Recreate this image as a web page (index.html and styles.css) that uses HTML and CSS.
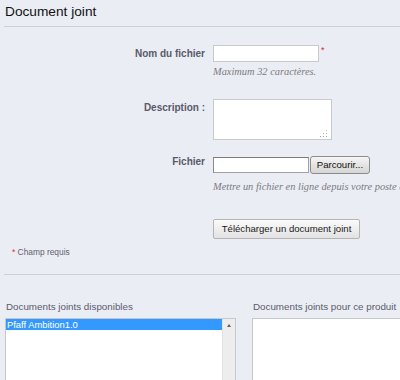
FILE: index.html
```html
<!DOCTYPE html>
<html lang="fr">
<head>
<meta charset="utf-8">
<title>Document joint</title>
<link rel="stylesheet" href="styles.css">
</head>
<body>
<div class="page">
  <h2 class="title">Document joint</h2>

  <div class="form">
    <div class="row row-name">
      <label class="lbl">Nom du fichier</label>
      <div class="field">
        <div class="inline">
          <input class="text" type="text">
          <span class="req">*</span>
        </div>
        <p class="hint">Maximum 32 caractères.</p>
      </div>
    </div>

    <div class="row row-desc">
      <label class="lbl lbl-desc">Description :</label>
      <div class="field">
        <div class="area-wrap">
          <textarea class="area"></textarea>
          <span class="grip"></span>
        </div>
      </div>
    </div>

    <div class="row row-file">
      <label class="lbl lbl-file">Fichier</label>
      <div class="field">
        <div class="inline file">
          <span class="file-box"></span>
          <span class="browse">Parcourir...</span>
        </div>
        <p class="hint hint-wide">Mettre un fichier en ligne depuis votre poste de travail.</p>
      </div>
    </div>

    <div class="row row-submit">
      <span class="lbl"></span>
      <div class="field">
        <button class="btn" type="button">Télécharger un document joint</button>
      </div>
    </div>
  </div>

  <p class="required"><span class="req-s">*</span> Champ requis</p>

  <div class="lists">
    <div class="col col-left">
      <p class="col-title">Documents joints disponibles</p>
      <div class="listbox">
        <div class="options">
          <div class="opt selected">Pfaff Ambition1.0</div>
        </div>
        <div class="scrollbar"><span class="arrow-up"></span></div>
      </div>
    </div>
    <div class="col col-right">
      <p class="col-title">Documents joints pour ce produit</p>
      <div class="listbox listbox-right"></div>
    </div>
  </div>
</div>
</body>
</html>
```

FILE: styles.css
```css
* { box-sizing: border-box; }

html, body {
  margin: 0;
  padding: 0;
  background: #ebedf4;
  width: 400px;
  height: 380px;
  overflow: hidden;
  font-family: "Liberation Sans", Arial, sans-serif;
}

.page {
  width: 400px;
}

.title {
  margin: 0 0 0 4px;
  padding-left: 1px;
  height: 27px;
  line-height: 24px;
  font-size: 13.7px;
  font-weight: normal;
  color: #111;
  border-bottom: 1px solid #cdd0d6;
}

.form {
  display: flex;
  flex-direction: column;
}

.row {
  display: flex;
  gap: 8px;
}

.lbl {
  width: 205px;
  flex: none;
  text-align: right;
  font-size: 10px;
  font-weight: bold;
  color: #585a69;
  line-height: 17px;
}

.field {
  display: flex;
  flex-direction: column;
}

.inline {
  display: flex;
  align-items: flex-start;
}

.row-name { margin-top: 18px; }

.text {
  width: 106px;
  height: 17px;
  margin: 0;
  padding: 0 2px;
  border: 1px solid #c9cacd;
  background: #fff;
  outline: none;
}

.req {
  color: #d81d1d;
  font-size: 9px;
  line-height: 9px;
  margin-left: 2px;
  margin-top: 1px;
}

.hint {
  margin: 3px 0 0 0;
  font-family: "Liberation Serif", "Times New Roman", serif;
  font-style: italic;
  font-size: 10.4px;
  line-height: 14px;
  color: #7b7b7f;
  white-space: nowrap;
}

.row-desc { margin-top: 20px; }

.lbl-desc {
  line-height: 14px;
  padding-top: 2px;
}

.area-wrap {
  position: relative;
  width: 119px;
  height: 41px;
}

.area {
  display: block;
  width: 119px;
  height: 41px;
  margin: 0;
  border: 1px solid #c9cacd;
  background: #fff;
  resize: none;
  outline: none;
}

.grip {
  position: absolute;
  right: 5px;
  bottom: 3px;
  width: 1px;
  height: 1px;
  background: #a5a5a5;
  box-shadow:
    0 -3px 0 #b5b5b5,
    -3px 0 0 #a5a5a5,
    -3px -3px 0 #b5b5b5,
    -6px 0 0 #a5a5a5,
    0 -6px 0 #c5c5c5;
}

.row-file { margin-top: 16px; }

.lbl-file {
  line-height: 12px;
}

.file {
  height: 18px;
}

.file-box {
  display: block;
  width: 96px;
  height: 16px;
  margin-top: 1px;
  background: #fff;
  border: 1px solid #a0a0a0;
  border-top-color: #7a7a7a;
  border-left-color: #8a8a8a;
}

.browse {
  display: block;
  height: 18px;
  width: 60px;
  margin-left: 1px;
  border: 1px solid #8c8c8c;
  border-radius: 3px;
  background: linear-gradient(#f6f6f6, #e4e4e4 50%, #d6d6d6);
  font-size: 9.6px;
  line-height: 16px;
  text-align: center;
  color: #111;
}

.hint-wide {
  margin-top: 6px;
}

.row-submit { margin-top: 25px; }

.btn {
  display: block;
  height: 20px;
  width: 147px;
  margin: 0;
  padding: 0;
  border: 1px solid #b4b4b4;
  border-radius: 2px;
  background: linear-gradient(#fbfbfb, #ececec 60%, #e2e2e2);
  font-family: "Liberation Sans", Arial, sans-serif;
  font-size: 9.6px;
  line-height: 18px;
  color: #1a1a1a;
  text-align: center;
}

.required {
  margin: 7px 0 0 0;
  padding-left: 12px;
  font-size: 8.4px;
  line-height: 12px;
  color: #5f6170;
}

.req-s {
  color: #d81d1d;
}

.lists {
  margin: 16px 0 0 4px;
  border-top: 1px solid #cdd0d6;
  padding: 26px 0 0 1px;
  display: flex;
  gap: 16px;
}

.col {
  display: flex;
  flex-direction: column;
}

.col-left { width: 231px; flex: none; }
.col-right { flex: 1; }

.col-title {
  margin: 0 0 5px 1px;
  font-size: 9.8px;
  line-height: 12px;
  color: #5a5c6a;
  white-space: nowrap;
}

.listbox {
  height: 100px;
  border: 1px solid #c6c8cc;
  background: #fff;
  display: flex;
}

.listbox-right {
  border-right: none;
}

.options {
  flex: 1;
}

.opt {
  height: 11px;
  line-height: 11px;
  font-size: 9.4px;
  color: #222;
  padding-left: 1px;
  white-space: nowrap;
}

.opt.selected {
  background: #3399ff;
  color: #fff;
}

.scrollbar {
  width: 13px;
  flex: none;
  background: #ededed;
  border-left: 1px solid #e2e2e2;
  position: relative;
}

.arrow-up {
  position: absolute;
  left: 4px;
  top: 5px;
  width: 0;
  height: 0;
  border-left: 2.5px solid transparent;
  border-right: 2.5px solid transparent;
  border-bottom: 3px solid #606060;
}
```
